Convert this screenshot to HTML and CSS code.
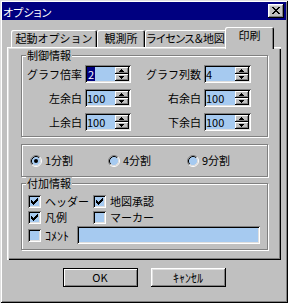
FILE: index.html
```html
<!DOCTYPE html>
<html lang="ja">
<head>
<meta charset="utf-8">
<title>オプション</title>
<link rel="stylesheet" href="styles.css">
</head>
<body>
<div class="window">
  <div class="titlebar">
    <span class="title">オプション</span>
    <span class="close">
      <svg width="8" height="7" viewBox="0 0 8 7" shape-rendering="crispEdges"><path d="M0 0h2v1H0zM6 0h2v1H6zM1 1h2v1H1zM5 1h2v1H5zM2 2h4v1H2zM3 3h2v1H3zM2 4h4v1H2zM1 5h2v1H1zM5 5h2v1H5zM0 6h2v1H0zM6 6h2v1H6z"/></svg>
    </span>
  </div>
  <div class="content">
    <div class="tabs">
      <div class="tab t1">起動オプション</div>
      <div class="tab t2">観測所</div>
      <div class="tab t3">ライセンス＆地図</div>
      <div class="tab t4 active">印刷</div>
    </div>
    <div class="panel">
      <div class="group g-ctrl">
        <span class="legend">制御情報</span>
        <div class="row">
          <span class="lbl l1">グラフ倍率</span>
          <div class="spin s1"><span class="val"><span class="hl">2</span></span><svg class="spinbtn" width="14" height="14" viewBox="0 0 14 14" shape-rendering="crispEdges"><rect width="14" height="14" fill="#c0c0c0"/><path fill="#fff" d="M0 0h13v1H1v6H0zM0 7h13v1H1v6H0z"/><path fill="#000" d="M13 0h1v7H0V6h13zM13 7h1v7H0v-1h13z"/><path fill="#808080" d="M12 1h1v5H1V5h11zM12 8h1v5H1v-1h11z"/><path d="M6 2h1v1H6zM5 3h3v1H5zM4 4h5v1H4zM4 9h5v1H4zM5 10h3v1H5zM6 11h1v1H6z"/></svg></div>
          <span class="lbl l2">グラフ列数</span>
          <div class="spin s2"><span class="val">4</span><svg class="spinbtn" width="14" height="14" viewBox="0 0 14 14" shape-rendering="crispEdges"><rect width="14" height="14" fill="#c0c0c0"/><path fill="#fff" d="M0 0h13v1H1v6H0zM0 7h13v1H1v6H0z"/><path fill="#000" d="M13 0h1v7H0V6h13zM13 7h1v7H0v-1h13z"/><path fill="#808080" d="M12 1h1v5H1V5h11zM12 8h1v5H1v-1h11z"/><path d="M6 2h1v1H6zM5 3h3v1H5zM4 4h5v1H4zM4 9h5v1H4zM5 10h3v1H5zM6 11h1v1H6z"/></svg></div>
        </div>
        <div class="row">
          <span class="lbl l1">左余白</span>
          <div class="spin s1"><span class="val">100</span><svg class="spinbtn" width="14" height="14" viewBox="0 0 14 14" shape-rendering="crispEdges"><rect width="14" height="14" fill="#c0c0c0"/><path fill="#fff" d="M0 0h13v1H1v6H0zM0 7h13v1H1v6H0z"/><path fill="#000" d="M13 0h1v7H0V6h13zM13 7h1v7H0v-1h13z"/><path fill="#808080" d="M12 1h1v5H1V5h11zM12 8h1v5H1v-1h11z"/><path d="M6 2h1v1H6zM5 3h3v1H5zM4 4h5v1H4zM4 9h5v1H4zM5 10h3v1H5zM6 11h1v1H6z"/></svg></div>
          <span class="lbl l2">右余白</span>
          <div class="spin s2"><span class="val">100</span><svg class="spinbtn" width="14" height="14" viewBox="0 0 14 14" shape-rendering="crispEdges"><rect width="14" height="14" fill="#c0c0c0"/><path fill="#fff" d="M0 0h13v1H1v6H0zM0 7h13v1H1v6H0z"/><path fill="#000" d="M13 0h1v7H0V6h13zM13 7h1v7H0v-1h13z"/><path fill="#808080" d="M12 1h1v5H1V5h11zM12 8h1v5H1v-1h11z"/><path d="M6 2h1v1H6zM5 3h3v1H5zM4 4h5v1H4zM4 9h5v1H4zM5 10h3v1H5zM6 11h1v1H6z"/></svg></div>
        </div>
        <div class="row">
          <span class="lbl l1">上余白</span>
          <div class="spin s1"><span class="val">100</span><svg class="spinbtn" width="14" height="14" viewBox="0 0 14 14" shape-rendering="crispEdges"><rect width="14" height="14" fill="#c0c0c0"/><path fill="#fff" d="M0 0h13v1H1v6H0zM0 7h13v1H1v6H0z"/><path fill="#000" d="M13 0h1v7H0V6h13zM13 7h1v7H0v-1h13z"/><path fill="#808080" d="M12 1h1v5H1V5h11zM12 8h1v5H1v-1h11z"/><path d="M6 2h1v1H6zM5 3h3v1H5zM4 4h5v1H4zM4 9h5v1H4zM5 10h3v1H5zM6 11h1v1H6z"/></svg></div>
          <span class="lbl l2">下余白</span>
          <div class="spin s2"><span class="val">100</span><svg class="spinbtn" width="14" height="14" viewBox="0 0 14 14" shape-rendering="crispEdges"><rect width="14" height="14" fill="#c0c0c0"/><path fill="#fff" d="M0 0h13v1H1v6H0zM0 7h13v1H1v6H0z"/><path fill="#000" d="M13 0h1v7H0V6h13zM13 7h1v7H0v-1h13z"/><path fill="#808080" d="M12 1h1v5H1V5h11zM12 8h1v5H1v-1h11z"/><path d="M6 2h1v1H6zM5 3h3v1H5zM4 4h5v1H4zM4 9h5v1H4zM5 10h3v1H5zM6 11h1v1H6z"/></svg></div>
        </div>
      </div>

      <div class="group g-radio">
        <label class="ritem ri1"><svg class="radio" width="12" height="12" viewBox="0 0 12 12"><circle cx="6" cy="6" r="4.5" fill="#a6caf0"/><path d="M2.11 9.89A5.5 5.5 0 0 1 9.89 2.11" stroke="#808080" fill="none"/><path d="M9.89 2.11A5.5 5.5 0 0 1 2.11 9.89" stroke="#fff" fill="none"/><path d="M2.82 9.18A4.5 4.5 0 0 1 9.18 2.82" stroke="#000" fill="none"/><path d="M9.18 2.82A4.5 4.5 0 0 1 2.82 9.18" stroke="#dfdfdf" fill="none"/><circle cx="6" cy="6" r="2" fill="#000"/></svg><span>1分割</span></label>
        <label class="ritem ri2"><svg class="radio" width="12" height="12" viewBox="0 0 12 12"><circle cx="6" cy="6" r="4.5" fill="#a6caf0"/><path d="M2.11 9.89A5.5 5.5 0 0 1 9.89 2.11" stroke="#808080" fill="none"/><path d="M9.89 2.11A5.5 5.5 0 0 1 2.11 9.89" stroke="#fff" fill="none"/><path d="M2.82 9.18A4.5 4.5 0 0 1 9.18 2.82" stroke="#000" fill="none"/><path d="M9.18 2.82A4.5 4.5 0 0 1 2.82 9.18" stroke="#dfdfdf" fill="none"/></svg><span>4分割</span></label>
        <label class="ritem ri3"><svg class="radio" width="12" height="12" viewBox="0 0 12 12"><circle cx="6" cy="6" r="4.5" fill="#a6caf0"/><path d="M2.11 9.89A5.5 5.5 0 0 1 9.89 2.11" stroke="#808080" fill="none"/><path d="M9.89 2.11A5.5 5.5 0 0 1 2.11 9.89" stroke="#fff" fill="none"/><path d="M2.82 9.18A4.5 4.5 0 0 1 9.18 2.82" stroke="#000" fill="none"/><path d="M9.18 2.82A4.5 4.5 0 0 1 2.82 9.18" stroke="#dfdfdf" fill="none"/></svg><span>9分割</span></label>
      </div>

      <div class="group g-add">
        <span class="legend">付加情報</span>
        <div class="crow">
          <label class="citem"><span class="cbox"><svg width="7" height="7" viewBox="0 0 7 7" shape-rendering="crispEdges"><path d="M6 0h1v1H6zM5 1h2v1H5zM0 2h1v1H0zM4 2h3v1H4zM0 3h2v1H0zM3 3h3v1H3zM0 4h5v1H0zM1 5h3v1H1zM2 6h1v1H2z"/></svg></span><span>ヘッダー</span></label>
          <label class="citem"><span class="cbox"><svg width="7" height="7" viewBox="0 0 7 7" shape-rendering="crispEdges"><path d="M6 0h1v1H6zM5 1h2v1H5zM0 2h1v1H0zM4 2h3v1H4zM0 3h2v1H0zM3 3h3v1H3zM0 4h5v1H0zM1 5h3v1H1zM2 6h1v1H2z"/></svg></span><span>地図承認</span></label>
        </div>
        <div class="crow crow-2">
          <label class="citem"><span class="cbox"><svg width="7" height="7" viewBox="0 0 7 7" shape-rendering="crispEdges"><path d="M6 0h1v1H6zM5 1h2v1H5zM0 2h1v1H0zM4 2h3v1H4zM0 3h2v1H0zM3 3h3v1H3zM0 4h5v1H0zM1 5h3v1H1zM2 6h1v1H2z"/></svg></span><span>凡例</span></label>
          <label class="citem"><span class="cbox"></span><span>マーカー</span></label>
        </div>
        <div class="crow crow-3">
          <label class="citem short"><span class="cbox"></span><span class="hw">ｺﾒﾝﾄ</span></label>
          <div class="textbox"></div>
        </div>
      </div>
    </div>
    <div class="buttons">
      <div class="btn default">OK</div>
      <div class="btn"><span class="hw">ｷｬﾝｾﾙ</span></div>
    </div>
  </div>
</div>
</body>
</html>
```
FILE: styles.css
```css
* { box-sizing: border-box; margin: 0; padding: 0; }
html, body { width: 288px; height: 303px; overflow: hidden; background: #c0c0c0; }
body {
  font-family: "Noto Sans CJK JP", "Liberation Sans", sans-serif;
  font-size: 11px;
  line-height: 13px;
  color: #000;
}
.window {
  width: 288px;
  height: 303px;
  padding: 2px;
  display: flex;
  flex-direction: column;
  box-shadow: inset 1px 1px #dfdfdf, inset -1px -1px #000, inset 2px 2px #fff, inset -2px -2px #808080;
}
.titlebar {
  height: 18px;
  flex: none;
  background: #000080;
  color: #fff;
  display: flex;
  align-items: center;
  justify-content: space-between;
  padding: 0 2px 0 1px;
}
.title { line-height: 13px; padding-top: 3px; font-feature-settings: "palt"; }
.close {
  width: 16px;
  height: 14px;
  background: #c0c0c0;
  display: flex;
  align-items: center;
  justify-content: center;
  padding: 0 1px 1px 0;
  box-shadow: inset -1px -1px #000, inset 1px 1px #fff, inset -2px -2px #808080, inset 2px 2px #dfdfdf;
}
.close svg { display: block; }

.content { padding: 7px 5px 0 5px; display: flex; flex-direction: column; }

.tabs {
  display: flex;
  align-items: flex-end;
  height: 20px;
  padding-left: 4px;
  position: relative;
  z-index: 1;
}
.tab {
  height: 17px;
  padding-top: 2px;
  text-align: center;
  white-space: nowrap;
  background: #c0c0c0;
  border-radius: 2px 2px 0 0;
  box-shadow: inset 1px 1px #fff, inset -1px 0 #000, inset -2px 0 #808080;
}
.t1 { width: 86px; }
.t2 { width: 48px; }
.t3 { width: 82px; font-feature-settings: "palt"; letter-spacing: -0.3px; padding-right: 1px; }
.t4 { width: 49px; }
.tab.active {
  height: 22px;
  margin: 0 -2px -2px -2px;
  padding-top: 2px;
}

.panel {
  height: 213px;
  padding: 8px 13px 0 14px;
  box-shadow: inset 1px 1px #fff, inset 2px 2px #dfdfdf, inset -1px -1px #000, inset -2px -2px #808080;
}

.group {
  position: relative;
  border: 1px solid #808080;
  box-shadow: inset 1px 1px #fff, 1px 1px #fff;
}
.legend {
  position: absolute;
  top: -7px;
  left: 4px;
  padding: 0 1px;
  background: #c0c0c0;
  line-height: 13px;
}

.g-ctrl {
  height: 82px;
  padding-top: 9px;
  display: flex;
  flex-direction: column;
  gap: 6px;
}
.row { display: flex; align-items: center; height: 18px; }
.lbl { text-align: right; margin-right: 3px; }
.l1 { width: 60px; }
.l2 { width: 70px; }
.spin {
  height: 18px;
  padding: 2px;
  display: flex;
  align-items: center;
  background: #a6caf0;
  box-shadow: inset 1px 1px #808080, inset -1px -1px #fff, inset 2px 2px #000, inset -2px -2px #dfdfdf;
}
.s1 { width: 46px; }
.s2 { width: 47px; }
.val { flex: 1; line-height: 14px; height: 14px; }
.hl { background: #000080; color: #fff; padding: 0 1px; display: inline-block; }
.spinbtn { display: block; flex: none; }

.g-radio {
  margin-top: 7px;
  height: 33px;
  display: flex;
  align-items: center;
  padding-left: 8px;
}
.ritem { display: flex; align-items: center; gap: 3px; }
.ri1 { width: 78px; }
.ri2 { width: 79px; }
.radio { display: block; flex: none; }

.g-add {
  margin-top: 6px;
  height: 67px;
  padding: 11px 0 0 6px;
}
.crow { display: flex; align-items: center; height: 13px; }
.crow-2 { margin-top: 3px; }
.crow-3 { margin-top: 2px; height: 18px; }
.citem { display: flex; align-items: center; gap: 4px; width: 65px; flex: none; white-space: nowrap; }
.citem.short { width: 49px; }
.hw { font-size: 12px; }
.cbox {
  width: 13px;
  height: 13px;
  flex: none;
  background: #a6caf0;
  padding: 3px;
  box-shadow: inset 1px 1px #808080, inset -1px -1px #fff, inset 2px 2px #000, inset -2px -2px #dfdfdf;
}
.cbox svg { display: block; }
.textbox {
  width: 183px;
  height: 18px;
  flex: none;
  background: #a6caf0;
  box-shadow: inset 1px 1px #808080, inset -1px -1px #fff, inset 2px 2px #000, inset -2px -2px #dfdfdf;
}

.buttons {
  margin-top: 8px;
  display: flex;
  justify-content: center;
  gap: 13px;
}
.btn {
  width: 75px;
  height: 19px;
  display: flex;
  align-items: center;
  justify-content: center;
  background: #c0c0c0;
  box-shadow: inset -1px -1px #000, inset 1px 1px #fff, inset -2px -2px #808080, inset 2px 2px #dfdfdf;
}
.btn.default {
  border: 1px solid #000;
  box-shadow: inset 1px 1px #fff, inset -1px -1px #808080;
}
```
